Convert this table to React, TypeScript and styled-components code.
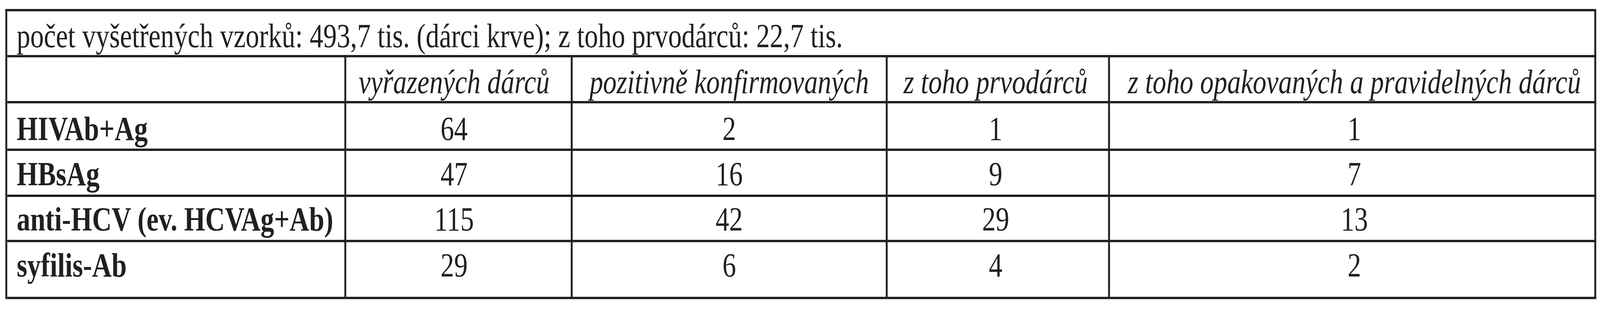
import { useEffect, useState } from "react";
import styled, { createGlobalStyle } from "styled-components";

const GlobalStyle = createGlobalStyle`
  html, body {
    margin: 0;
    padding: 0;
    background: #ffffff;
    overflow: hidden;
  }
`;

const INK = "#231f20";

// the table is drawn on a 5074px wide sheet, fitted to the window width
const SHEET_W = 5074;

// column widths (cell + right rule) and how far the text sits off centre
const columns = [
  { w: 1075, shift: 0 },
  { w: 718, shift: -14 },
  { w: 999, shift: 0 },
  { w: 705, shift: -7 },
  { w: 1542, shift: 7 },
];

const headers = [
  "vyřazených dárců",
  "pozitivně konfirmovaných",
  "z toho prvodárců",
  "z toho opakovaných a pravidelných dárců",
];

const rows = [
  { label: "HIVAb+Ag", values: [64, 2, 1, 1], h: 122, pad: 16 },
  { label: "HBsAg", values: [47, 16, 9, 7], h: 118, pad: 10 },
  { label: "anti-HCV (ev. HCVAg+Ab)", values: [115, 42, 29, 13], h: 116, pad: 8 },
  { label: "syfilis-Ab", values: [29, 6, 4, 2], h: 146, pad: 10 },
];

const Viewport = styled.div`
  width: 100vw;
  overflow: hidden;
`;

const Sheet = styled.div`
  width: ${SHEET_W}px;
  padding: 23px 0 0 17px;
  box-sizing: border-box;
  transform-origin: 0 0;
`;

const Table = styled.table`
  table-layout: fixed;
  width: 5045px;
  border-collapse: separate;
  border-spacing: 0;
  border-top: 6px solid ${INK};
  border-left: 6px solid ${INK};
  font-family: "Liberation Serif", "Times New Roman", serif;
  font-size: 86px;
  line-height: 98px;
  color: ${INK};
`;

const Row = styled.tr<{ $h: number; $pad: number }>`
  height: ${(p) => p.$h}px;

  & > td,
  & > th {
    padding-top: ${(p) => p.$pad}px;
  }
`;

const Cell = styled.td`
  box-sizing: border-box;
  vertical-align: top;
  padding: 0;
  border-right: 6px solid ${INK};
  border-bottom: 6px solid ${INK};
  white-space: nowrap;
  overflow: hidden;
`;

const TitleCell = styled(Cell)`
  padding-left: 30px;
  text-align: left;
`;

const CenteredCell = styled(Cell)<{ $shift: number }>`
  text-align: center;
  padding-left: ${(p) => Math.max(0, p.$shift * 2)}px;
  padding-right: ${(p) => Math.max(0, -p.$shift * 2)}px;
`;

const HeadCell = styled(CenteredCell).attrs({ as: "th" })`
  font-weight: normal;
  font-style: italic;
`;

const LabelCell = styled(Cell)`
  padding-left: 30px;
  font-weight: bold;
  text-align: left;
`;

const ValueCell = styled(CenteredCell)``;

const fit = () => (typeof window !== "undefined" ? window.innerWidth / SHEET_W : 1);

export default function App() {
  const [scale, setScale] = useState(fit);

  useEffect(() => {
    const onResize = () => setScale(fit());
    window.addEventListener("resize", onResize);
    return () => window.removeEventListener("resize", onResize);
  }, []);

  return (
    <Viewport>
      <GlobalStyle />
      <Sheet style={{ transform: `scale(${scale}, 1)` }}>
        <Table>
          <colgroup>
            {columns.map((c, i) => (
              <col key={i} style={{ width: c.w }} />
            ))}
          </colgroup>
          <tbody>
            <Row $h={117} $pad={14}>
              <TitleCell colSpan={5}>
                počet vyšetřených vzorků: 493,7 tis. (dárci krve); z toho prvodárců: 22,7 tis.
              </TitleCell>
            </Row>
            <Row $h={117} $pad={14}>
              <Cell />
              {headers.map((h, i) => (
                <HeadCell key={h} $shift={columns[i + 1].shift}>
                  {h}
                </HeadCell>
              ))}
            </Row>
            {rows.map((r) => (
              <Row key={r.label} $h={r.h} $pad={r.pad}>
                <LabelCell>{r.label}</LabelCell>
                {r.values.map((v, i) => (
                  <ValueCell key={i} $shift={columns[i + 1].shift}>
                    {v}
                  </ValueCell>
                ))}
              </Row>
            ))}
          </tbody>
        </Table>
      </Sheet>
    </Viewport>
  );
}
